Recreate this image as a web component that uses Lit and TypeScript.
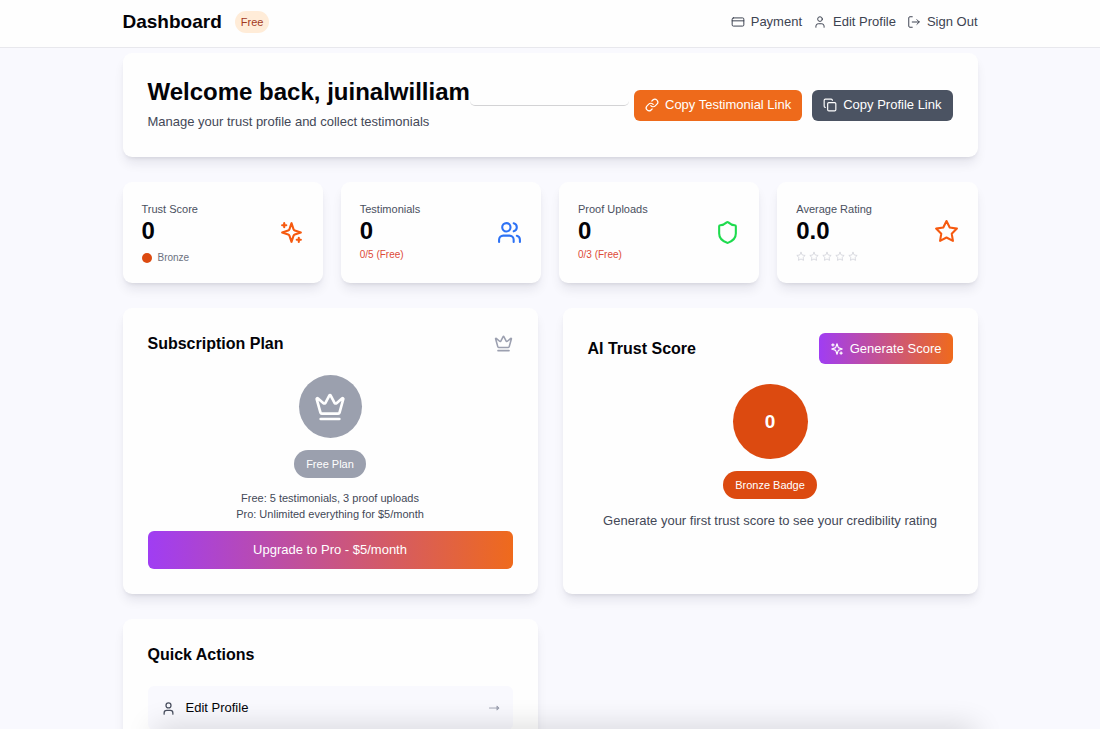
import { LitElement, html, css, svg } from "lit";
import { customElement, property } from "lit/decorators.js";

const ICONS = {
  card: svg`<rect width="20" height="14" x="2" y="5" rx="2"/><path d="M2 10h20"/>`,
  user: svg`<path d="M19 21v-2a4 4 0 0 0-4-4H9a4 4 0 0 0-4 4v2"/><circle cx="12" cy="7" r="4"/>`,
  logout: svg`<path d="M9 21H5a2 2 0 0 1-2-2V5a2 2 0 0 1 2-2h4"/><path d="m17 16 4-4-4-4"/><path d="M21 12H9"/>`,
  link: svg`<path d="M10 13a5 5 0 0 0 7.54.54l3-3a5 5 0 0 0-7.07-7.07l-1.72 1.71"/><path d="M14 11a5 5 0 0 0-7.54-.54l-3 3a5 5 0 0 0 7.07 7.07l1.71-1.71"/>`,
  copy: svg`<rect width="14" height="14" x="8" y="8" rx="2"/><path d="M4 16c-1.1 0-2-.9-2-2V4c0-1.1.9-2 2-2h10c1.1 0 2 .9 2 2"/>`,
  sparkles: svg`<path d="m12 3-1.912 5.813a2 2 0 0 1-1.275 1.275L3 12l5.813 1.912a2 2 0 0 1 1.275 1.275L12 21l1.912-5.813a2 2 0 0 1 1.275-1.275L21 12l-5.813-1.912a2 2 0 0 1-1.275-1.275L12 3Z"/><path d="M5 3v4"/><path d="M19 17v4"/><path d="M3 5h4"/><path d="M17 19h4"/>`,
  users: svg`<path d="M16 21v-2a4 4 0 0 0-4-4H6a4 4 0 0 0-4 4v2"/><circle cx="9" cy="7" r="4"/><path d="M22 21v-2a4 4 0 0 0-3-3.87"/><path d="M16 3.13a4 4 0 0 1 0 7.75"/>`,
  shield: svg`<path d="M20 13c0 5-3.5 7.5-7.66 8.95a1 1 0 0 1-.67-.01C7.5 20.5 4 18 4 13V6a1 1 0 0 1 1-1c2 0 4.5-1.2 6.24-2.72a1.17 1.17 0 0 1 1.52 0C14.51 3.81 17 5 19 5a1 1 0 0 1 1 1z"/>`,
  star: svg`<path d="m12 1 3.09 6.26L22 8.27l-5 4.87 1.18 6.88L12 16.77l-6.18 3.25L7 13.14 2 8.27l6.91-1.01L12 1z"/>`,
  crown: svg`<path d="M11.562 3.266a.5.5 0 0 1 .876 0L15.39 8.87a1 1 0 0 0 1.516.294L21.183 5.5a.5.5 0 0 1 .798.519l-2.834 10.246a1 1 0 0 1-.956.734H5.81a1 1 0 0 1-.957-.734L2.02 6.02a.5.5 0 0 1 .798-.519l4.276 3.664a1 1 0 0 0 1.516-.294z"/><path d="M5 21h14"/>`,
  arrow: svg`<path d="M1 11h20"/><path d="m18 7 4 4-4 4z" fill="currentColor"/>`,
};
type IconName = keyof typeof ICONS;

@customElement("ui-icon")
class UiIcon extends LitElement {
  static styles = css`
    :host { display: block; flex: none; width: 14px; height: 14px; }
    svg {
      display: block; width: 100%; height: 100%; overflow: visible;
      fill: none; stroke: currentColor; stroke-width: var(--icon-stroke, 2);
      stroke-linecap: round; stroke-linejoin: round;
    }
  `;
  @property() name: IconName = "user";
  render() {
    return html`<svg viewBox="0 0 24 24" aria-hidden="true">${ICONS[this.name]}</svg>`;
  }
}

@customElement("stat-card")
class StatCard extends LitElement {
  static styles = css`
    :host {
      display: flex; align-items: center; justify-content: space-between;
      padding: 19px; border-radius: 9px; background: #fefefe;
      box-shadow: 0 8px 12px -2px rgba(20, 20, 50, .09), 0 3px 5px -3px rgba(20, 20, 50, .14);
    }
    .text { display: flex; flex-direction: column; }
    .label { font-size: 11px; line-height: 16px; color: #4a5060; }
    .value { font-size: 24px; line-height: 28px; font-weight: 700; color: #030308; }
    .foot { height: 19px; display: flex; align-items: flex-start; font-size: 10px; }
    ui-icon { width: 25px; height: 25px; }
    .orange { color: #f65a10; }
    .blue { color: #2d72f5; }
    .green { color: #1edb4e; }
  `;
  @property() label = "";
  @property() value = "";
  @property() icon: IconName = "star";
  @property() tone = "orange";
  render() {
    return html`
      <div class="text">
        <span class="label">${this.label}</span>
        <span class="value">${this.value}</span>
        <div class="foot"><slot></slot></div>
      </div>
      <ui-icon class=${this.tone} name=${this.icon}></ui-icon>
    `;
  }
}

@customElement("app-root")
class AppRoot extends LitElement {
  static styles = css`
    :host {
      display: block; height: 100vh; overflow-y: auto; scrollbar-width: none;
      background: #f9f9fe; color: #030308;
      font-family: "Liberation Sans", Arial, Helvetica, sans-serif; font-size: 13px; line-height: 20px;
    }
    h1, h2, h3, p { margin: 0; }
    button { font: inherit; border: 0; cursor: pointer; }
    a { color: inherit; text-decoration: none; }
    .container { box-sizing: border-box; width: 100%; max-width: 905px; margin: 0 auto; padding: 0 25px; }

    header { position: sticky; top: 0; z-index: 2; background: #fefefe; border-bottom: 1px solid #e8e8ed; }
    .bar { display: flex; align-items: center; justify-content: space-between; padding-top: 9px; padding-bottom: 12px; }
    .brand { display: flex; align-items: center; gap: 13px; }
    .brand h1 { font-size: 19px; line-height: 26px; }
    .tag { padding: 1px 6px; border-radius: 11px; background: #ffecd8; color: #a3391c; font-size: 11px; line-height: 20px; }
    nav { display: flex; gap: 11px; color: #3d4351; --icon-stroke: 1.7; }
    nav a { display: flex; align-items: center; gap: 6px; }

    .page { display: flex; flex-direction: column; gap: 25px; padding-top: 5px; padding-bottom: 25px; }
    .card {
      padding: 25px; border-radius: 9px; background: #fefefe;
      box-shadow: 0 8px 12px -2px rgba(20, 20, 50, .09), 0 3px 5px -3px rgba(20, 20, 50, .14);
    }
    .welcome { display: flex; align-items: center; }
    .welcome h2 { font-size: 24px; line-height: 28px; padding-bottom: 6px; }
    .welcome p { color: #434857; }
    .rule { flex: 1; height: 8px; margin: 0 5px 8px 0; border-bottom: 1px solid #d3d3d5; border-radius: 0 0 5px 5px; }
    .actions { display: flex; gap: 10px; }
    .btn {
      display: flex; align-items: center; justify-content: center; gap: 6px;
      height: 31px; padding: 0 11px; border-radius: 6px; color: #fff; white-space: nowrap;
    }
    .orange { background: #ee6a1b; }
    .slate { background: #4b5362; }
    .fade { background: linear-gradient(90deg, #a03df3, #ef6a1c); }
    .wide { width: 100%; height: 38px; }

    .stats { display: grid; grid-template-columns: repeat(4, 1fr); gap: 18px; }
    .tier { display: flex; align-items: center; gap: 6px; color: #6c7180; padding-top: 6px; line-height: 14px; }
    .dot { width: 10px; height: 10px; border-radius: 50%; background: #dc4a10; }
    .limit { color: #dd4a38; }
    .stars { display: flex; gap: 3px; color: #d2d4db; padding-top: 7px; }
    .stars ui-icon { width: 10px; height: 10px; }

    .panels { display: grid; grid-template-columns: repeat(2, 1fr); gap: 25px; }
    .head { display: flex; align-items: center; justify-content: space-between; }
    h3 { font-size: 16px; line-height: 21px; }
    .head > ui-icon { width: 19px; height: 19px; color: #9ca0b0; }
    .stack { display: flex; flex-direction: column; align-items: center; gap: 12px; text-align: center; color: #434857; }
    .plan { padding: 21px 0 9px; font-size: 11px; line-height: 16px; }
    .score { padding-top: 20px; }
    .disc { display: grid; place-items: center; border-radius: 50%; color: #fff; }
    .disc.grey { width: 63px; height: 63px; }
    .disc.grey ui-icon { width: 32px; height: 32px; }
    .disc.bronze { width: 75px; height: 75px; font-size: 19px; font-weight: 700; }
    .grey { background: #9ba0ae; }
    .bronze { background: #dc4a10; }
    .pill { padding: 6px 12px; border-radius: 14px; color: #fff; font-size: 11px; line-height: 16px; }
    .item {
      display: flex; align-items: center; gap: 10px; margin-top: 21px; padding: 12px 13px;
      border-radius: 6px; background: #f9f9fe;
    }
    .item ui-icon { color: #4a5060; width: 15px; height: 15px; }
    .item .go { width: 11px; height: 11px; margin-left: auto; color: #9ca0b0; }
    .edge {
      position: fixed; left: 155px; right: 125px; bottom: -20px; height: 20px; z-index: 3;
      box-shadow: 0 0 30px rgba(0, 0, 0, .19); pointer-events: none;
    }
  `;

  render() {
    return html`
      <header>
        <div class="container bar">
          <div class="brand"><h1>Dashboard</h1><span class="tag">Free</span></div>
          <nav>
            <a href="#payment"><ui-icon name="card"></ui-icon>Payment</a>
            <a href="#profile"><ui-icon name="user"></ui-icon>Edit Profile</a>
            <a href="#signout"><ui-icon name="logout"></ui-icon>Sign Out</a>
          </nav>
        </div>
      </header>
      <main class="container page">
        <section class="card welcome">
          <div>
            <h2>Welcome back, juinalwilliam</h2>
            <p>Manage your trust profile and collect testimonials</p>
          </div>
          <div class="rule"></div>
          <div class="actions">
            <button class="btn orange"><ui-icon name="link"></ui-icon>Copy Testimonial Link</button>
            <button class="btn slate"><ui-icon name="copy"></ui-icon>Copy Profile Link</button>
          </div>
        </section>
        <section class="stats">
          <stat-card label="Trust Score" value="0" icon="sparkles">
            <span class="tier"><span class="dot"></span>Bronze</span>
          </stat-card>
          <stat-card label="Testimonials" value="0" icon="users" tone="blue">
            <span class="limit">0/5 (Free)</span>
          </stat-card>
          <stat-card label="Proof Uploads" value="0" icon="shield" tone="green">
            <span class="limit">0/3 (Free)</span>
          </stat-card>
          <stat-card label="Average Rating" value="0.0" icon="star">
            <span class="stars">${[1, 2, 3, 4, 5].map(() => html`<ui-icon name="star"></ui-icon>`)}</span>
          </stat-card>
        </section>
        <section class="panels">
          <article class="card">
            <div class="head"><h3>Subscription Plan</h3><ui-icon name="crown"></ui-icon></div>
            <div class="stack plan">
              <div class="disc grey"><ui-icon name="crown"></ui-icon></div>
              <span class="pill grey">Free Plan</span>
              <p>Free: 5 testimonials, 3 proof uploads<br />Pro: Unlimited everything for $5/month</p>
            </div>
            <button class="btn fade wide">Upgrade to Pro - $5/month</button>
          </article>
          <article class="card">
            <div class="head">
              <h3>AI Trust Score</h3>
              <button class="btn fade"><ui-icon name="sparkles"></ui-icon>Generate Score</button>
            </div>
            <div class="stack score">
              <div class="disc bronze">0</div>
              <span class="pill bronze">Bronze Badge</span>
              <p>Generate your first trust score to see your credibility rating</p>
            </div>
          </article>
          <article class="card">
            <h3>Quick Actions</h3>
            <a class="item" href="#profile">
              <ui-icon name="user"></ui-icon>Edit Profile<ui-icon class="go" name="arrow"></ui-icon>
            </a>
          </article>
        </section>
      </main>
      <div class="edge"></div>
    `;
  }
}
